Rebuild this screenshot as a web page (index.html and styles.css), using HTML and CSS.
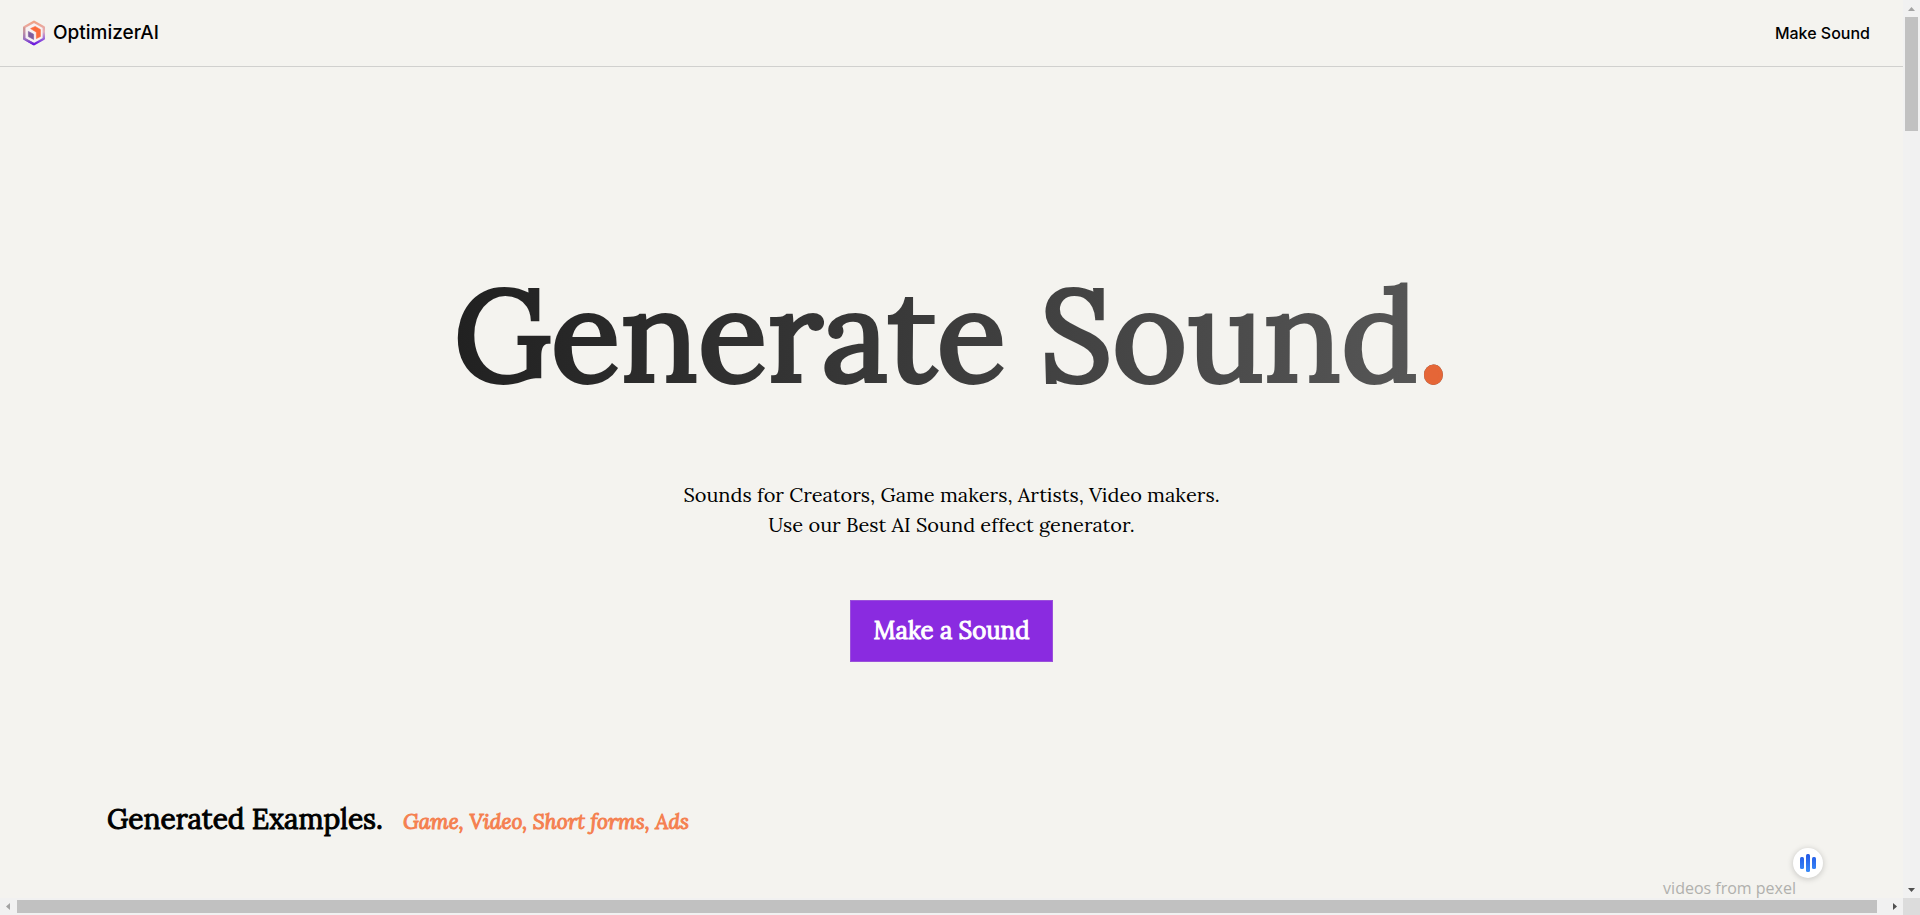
FILE: index.html
```html
<!DOCTYPE html>
<html lang="en">
<head>
<meta charset="utf-8">
<title>OptimizerAI</title>
<link rel="stylesheet" href="styles.css">
</head>
<body>
<div class="window">
  <div class="page">
    <header class="topbar">
      <a class="brand" href="#">
        <svg class="brand-logo" viewBox="0 0 24 26" aria-hidden="true">
          <defs>
            <linearGradient id="ring" x1="0" y1="0" x2="0" y2="1">
              <stop offset="0" stop-color="#f0a184"/>
              <stop offset="0.45" stop-color="#e3b0bd"/>
              <stop offset="0.72" stop-color="#a070d8"/>
              <stop offset="1" stop-color="#6a14e0"/>
            </linearGradient>
            <linearGradient id="side" x1="0" y1="0" x2="0" y2="1">
              <stop offset="0" stop-color="#c48e86" stop-opacity="0.7"/>
              <stop offset="0.7" stop-color="#9a78b4" stop-opacity="0.8"/>
              <stop offset="1" stop-color="#6a14e0"/>
            </linearGradient>
          </defs>
          <path d="M12 1.8 21.8 7.3V18.7L12 24.2 2.2 18.7V7.3Z" fill="#f7f1f3" stroke="url(#ring)" stroke-width="2.4" stroke-linejoin="round"/>
          <path d="M2.2 7.3V18.7L12 24.2" fill="none" stroke="url(#side)" stroke-width="2.2"/>
          <path d="M8.6 8.600 13.2 6.400 18.400 9.5V16.600L14.400 18.6V12.2Z" fill="#fb6a3c" stroke="#fb6a3c" stroke-width="0.6" stroke-linejoin="round"/>
          <path d="M6.400 11.4 11.6 14.200V19.400L6.400 16.6Z" fill="#7d5c9e" stroke="#7d5c9e" stroke-width="0.6" stroke-linejoin="round"/>
        </svg>
        <span>OptimizerAI</span>
      </a>
      <nav><a class="nav-link" href="#">Make Sound</a></nav>
    </header>
    <main>
      <section class="hero">
        <h1 class="hero-title">Generate Sound<span class="hero-dot">.</span></h1>
        <p class="hero-text">Sounds for Creators, Game makers, Artists, Video makers.<br>Use our Best AI Sound effect generator.</p>
        <button class="cta" type="button">Make a Sound</button>
      </section>
      <section class="examples">
        <div class="examples-head">
          <h2 class="examples-title">Generated Examples.</h2>
          <em class="examples-kinds">Game, Video, Short forms, Ads</em>
        </div>
        <p class="credit">videos from pexel</p>
      </section>
    </main>
    <button class="voice" type="button" aria-label="Voice">
      <svg viewBox="0 0 30 30" aria-hidden="true">
        <defs>
          <linearGradient id="bars" gradientUnits="userSpaceOnUse" x1="0" y1="6" x2="0" y2="24">
            <stop offset="0" stop-color="#2458e6"/>
            <stop offset="1" stop-color="#3a8cf8"/>
          </linearGradient>
        </defs>
        <g fill="url(#bars)">
          <rect x="7" y="9" width="4" height="12" rx="1.5"/>
          <rect x="13" y="6" width="4" height="18" rx="1.5"/>
          <rect x="19" y="9" width="4" height="12" rx="1.5"/>
        </g>
      </svg>
    </button>
  </div>
  <div class="bar bar-v">
    <svg class="arrow" viewBox="0 0 17 17"><path d="M5 11 8.500 7 12 11Z" fill="#a3a3a3"/></svg>
    <div class="track"><div class="thumb"></div></div>
    <svg class="arrow" viewBox="0 0 17 17"><path d="M5 7H12L8.500 11Z" fill="#505050"/></svg>
  </div>
  <div class="bar bar-h">
    <svg class="arrow" viewBox="0 0 17 17"><path d="M10 5V12L6 8.500Z" fill="#a3a3a3"/></svg>
    <div class="track"><div class="thumb"></div></div>
    <svg class="arrow" viewBox="0 0 17 17"><path d="M7 5V12L11 8.500Z" fill="#505050"/></svg>
  </div>
  <div class="corner"></div>
</div>
</body>
</html>
```

FILE: styles.css
```css
* {
  box-sizing: border-box;
}

body {
  margin: 0;
  background: #f4f3ef;
  color: #000;
  font-family: Lora, "Liberation Serif", serif;
}

h1, h2, p {
  margin: 0;
  font-weight: 400;
}

a {
  color: inherit;
  text-decoration: none;
}

.window {
  display: grid;
  grid-template-columns: minmax(0, 1fr) 17px;
  grid-template-rows: minmax(0, 1fr) 17px;
  height: 100vh;
}

.page {
  position: relative;
  overflow: hidden;
}

.topbar {
  display: flex;
  align-items: center;
  justify-content: space-between;
  padding: 16px 33px 16px 22px;
  border-bottom: 1px solid #d0d0ce;
  font-family: Inter, sans-serif;
  font-weight: 500;
}

.brand {
  display: flex;
  align-items: center;
  gap: 7px;
  font-size: 19px;
  line-height: 34px;
}

.brand-logo {
  width: 24px;
  height: 26px;
}

.nav-link {
  font-size: 16px;
  line-height: 32px;
}

.hero {
  display: flex;
  flex-direction: column;
  align-items: center;
  padding-top: 178px;
  text-align: center;
}

.hero-title {
  background: linear-gradient(100deg, #202020, #585858);
  background-clip: text;
  -webkit-background-clip: text;
  color: transparent;
  font-size: 128px;
  line-height: 178px;
  -webkit-text-stroke: 4px transparent;
}

.hero-dot {
  color: #e56637;
  -webkit-text-stroke: 4px #e56637;
}

.hero-text {
  margin-top: 57px;
  font-size: 20px;
  line-height: 30px;
}

.cta {
  margin-top: 60px;
  padding: 15px 22px;
  border: 1px solid #9a50da;
  background: #8a2be0;
  color: #fff;
  font: 400 24px/30px Lora, "Liberation Serif", serif;
  -webkit-text-stroke: 1px #fff;
}

.examples {
  padding: 137px 107px 0;
}

.examples-head {
  display: flex;
  align-items: baseline;
  gap: 20px;
}

.examples-title {
  font-size: 28px;
  line-height: 40px;
  -webkit-text-stroke: 1px #000;
}

.examples-kinds {
  color: #f58050;
  font-size: 21px;
  -webkit-text-stroke: 1px #f58050;
}

.credit {
  margin-top: 37px;
  color: #b0b0ad;
  font: 16px/24px "Open Sans", sans-serif;
  text-align: right;
}

.voice {
  position: absolute;
  right: 80px;
  bottom: 20px;
  width: 30px;
  height: 30px;
  padding: 0;
  border: 0;
  border-radius: 50%;
  background: #fff;
  box-shadow: 0 1px 6px rgba(0, 0, 0, 0.2);
}

.voice svg {
  display: block;
}

.bar {
  display: flex;
  background: #f1f1f1;
}

.bar-v {
  flex-direction: column;
}

.arrow {
  flex: none;
  width: 17px;
  height: 17px;
}

.track {
  flex: 1;
}

.thumb {
  background: #c1c1c1;
}

.bar-v .thumb {
  height: 13.2%;
  margin: 0 2px;
}

.bar-h .track {
  display: flex;
  padding: 2px 0;
}

.bar-h .thumb {
  width: 99.5%;
}

.corner {
  background: #dcdcdc;
}
```
